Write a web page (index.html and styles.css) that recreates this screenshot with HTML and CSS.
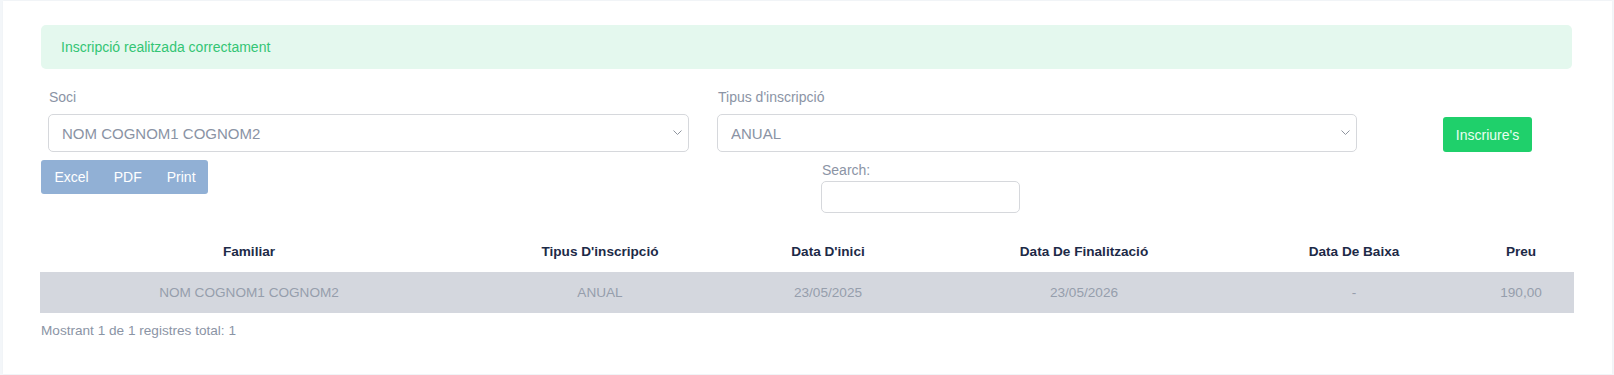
FILE: index.html
```html
<!DOCTYPE html>
<html lang="ca">
<head>
    <meta charset="utf-8">
    <title>Inscripcions</title>
    <link rel="stylesheet" href="styles.css">
</head>
<body>

<div class="card">

    <div class="alert-success">Inscripció realitzada correctament</div>

    <form class="form-row">
        <div class="field">
            <label for="soci">Soci</label>
            <div class="select-wrap">
                <select id="soci">
                    <option>NOM COGNOM1 COGNOM2</option>
                </select>
                <svg class="chevron" width="9" height="5" viewBox="0 0 9 5"><path d="M0.5 0.5 L4.5 4.5 L8.5 0.5" fill="none" stroke="#8e949e" stroke-width="1"/></svg>
            </div>
        </div>
        <div class="field">
            <label for="tipus">Tipus d'inscripció</label>
            <div class="select-wrap">
                <select id="tipus">
                    <option>ANUAL</option>
                </select>
                <svg class="chevron" width="9" height="5" viewBox="0 0 9 5"><path d="M0.5 0.5 L4.5 4.5 L8.5 0.5" fill="none" stroke="#8e949e" stroke-width="1"/></svg>
            </div>
        </div>
        <button type="button" class="btn-green">Inscriure's</button>
    </form>

    <div class="dt-top">
        <div class="dt-buttons">
            <button type="button">Excel</button>
            <button type="button">PDF</button>
            <button type="button">Print</button>
        </div>
        <div class="dt-filter">
            <label for="search">Search:</label>
            <input type="search" id="search">
        </div>
    </div>

    <table class="events">
        <thead>
            <tr>
                <th class="c1">Familiar</th>
                <th class="c2">Tipus D'inscripció</th>
                <th class="c3">Data D'inici</th>
                <th class="c4">Data De Finalització</th>
                <th class="c5">Data De Baixa</th>
                <th class="c6">Preu</th>
            </tr>
        </thead>
        <tbody>
            <tr>
                <td>NOM COGNOM1 COGNOM2</td>
                <td>ANUAL</td>
                <td>23/05/2025</td>
                <td>23/05/2026</td>
                <td>-</td>
                <td class="c6">190,00</td>
            </tr>
        </tbody>
    </table>

    <div class="dt-info">Mostrant 1 de 1 registres total: 1</div>

</div>

</body>
</html>
```

FILE: styles.css
```css
BODY {
    margin: 0;
    background-color: #f3f6f9;
    font-family: "Liberation Sans", Arial, sans-serif;
    font-size: 14px;
    color: #8b94a5;
}

.card {
    background-color: #fff;
    margin: 1px 2px 1px 3px;
    padding: 24px 40px 33px 38px;
    box-shadow: 0 0 2px rgba(0, 0, 0, 0.03);
}

.alert-success {
    background-color: #e4f8ee;
    color: #33c574;
    border-radius: 5px;
    height: 44px;
    line-height: 44px;
    padding: 0 20px;
}

.form-row {
    display: grid;
    grid-template-columns: 641px 640px 1fr;
    column-gap: 28px;
    padding-left: 7px;
    margin: 18px 0 0 0;
}

.field LABEL {
    display: block;
    line-height: 21px;
    padding-left: 1px;
    color: #8b94a5;
}

.select-wrap {
    position: relative;
    margin-top: 6px;
}

.select-wrap SELECT {
    -webkit-appearance: none;
    appearance: none;
    width: 100%;
    height: 38px;
    border: 1px solid #d6d8dc;
    border-radius: 5px;
    background-color: #fff;
    font-family: "Liberation Sans", Arial, sans-serif;
    font-size: 15px;
    color: #8a93a4;
    padding: 0 13px;
}

.chevron {
    position: absolute;
    right: 7px;
    top: 16px;
}

.btn-green {
    align-self: end;
    justify-self: start;
    margin-left: 58px;
    width: 89px;
    height: 35px;
    border: 0;
    border-radius: 3px;
    background-color: #1fd06b;
    color: #e9fff1;
    font-family: "Liberation Sans", Arial, sans-serif;
    font-size: 14px;
}

.dt-top {
    display: grid;
    grid-template-columns: 780px auto;
    margin-top: 8px;
}

.dt-buttons {
    display: flex;
    align-self: start;
    width: 167px;
    height: 34px;
    background-color: #91b0d5;
    border-radius: 3px;
    padding-left: 1px;
    box-sizing: border-box;
}

.dt-buttons BUTTON {
    border: 0;
    background: none;
    color: #fff;
    font-family: "Liberation Sans", Arial, sans-serif;
    font-size: 14px;
    padding: 0 12.5px;
}

.dt-filter LABEL {
    display: block;
    line-height: 20px;
    padding-left: 1px;
    color: #8b94a5;
}

.dt-filter INPUT {
    display: block;
    margin-top: 1px;
    width: 199px;
    height: 32px;
    box-sizing: border-box;
    border: 1px solid #d6d8dc;
    border-radius: 5px;
    background: #fff;
}

.events {
    width: 1534px;
    margin: 18px 0 0 -1px;
    border-collapse: collapse;
    table-layout: fixed;
    font-size: 13.6px;
}

.events TH, .events TD {
    box-sizing: border-box;
    padding: 10px;
    line-height: 21px;
    text-align: center;
}

.events TH {
    color: #1d2a47;
    font-weight: bold;
}

.events TD {
    background-color: #d4d7de;
    color: #969eac;
}

.events .c1 { width: 418px; }
.events .c2 { width: 284px; }
.events .c3 { width: 172px; }
.events .c4 { width: 340px; }
.events .c5 { width: 200px; }
.events .c6 { padding-left: 24px; }

.dt-info {
    margin-top: 7px;
    font-size: 13.6px;
    line-height: 21px;
    color: #8b94a5;
}
```
